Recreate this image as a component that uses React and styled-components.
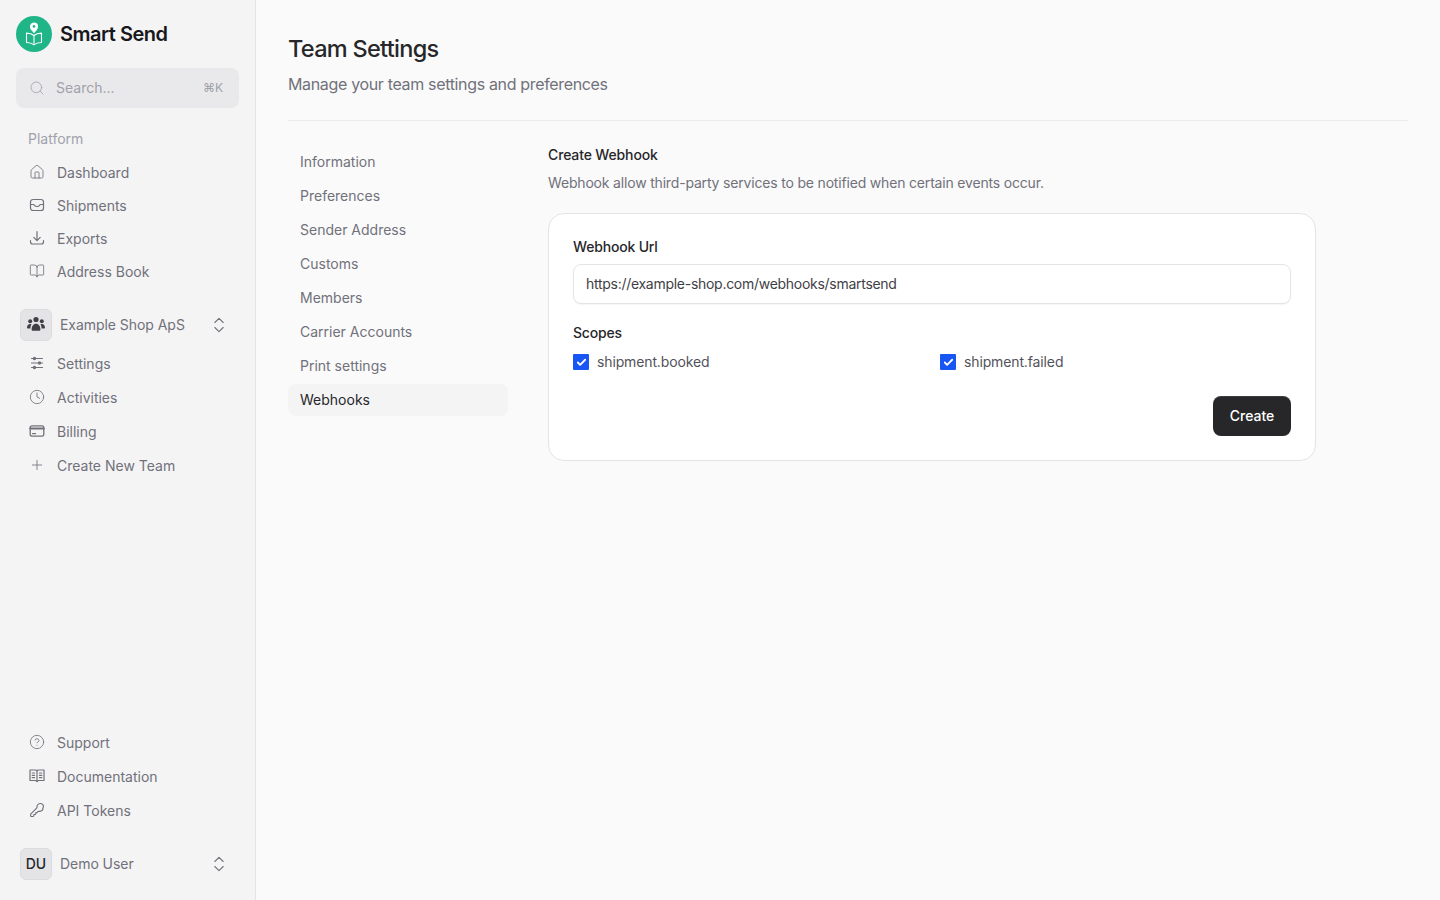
import styled, {createGlobalStyle} from "styled-components";
import {ChevronsUpDown, Check, CircleHelp, Clock, BookOpen, Home, Plus, Search} from "lucide-react";

const GlobalStyle = createGlobalStyle`
  * { box-sizing: border-box; }
  html, body { margin: 0; height: 100%; }
  body {
    font-family: Inter, 'Liberation Sans', sans-serif;
    font-size: 14px;
    background: #fafafa;
    color: #27272a;
  }
`;

const Layout = styled.div`
  display: flex;
  width: 1440px;
  height: 900px;
  overflow: hidden;
`;

const Sidebar = styled.aside`
  width: 256px;
  flex: none;
  display: flex;
  flex-direction: column;
  padding: 16px 16px 20px;
  background: #f4f4f5;
  border-right: 1px solid #e4e4e7;
`;

const Brand = styled.div`
  display: flex;
  align-items: center;
  gap: 8px;
  height: 36px;
  font-size: 20px;
  font-weight: 600;
  letter-spacing: -0.5px;
  color: #18181b;
`;

const LogoMark = styled.div`
  width: 36px;
  height: 36px;
  border-radius: 50%;
  background: #20b586;
  display: flex;
  align-items: center;
  justify-content: center;
`;

const SearchBox = styled.div`
  margin-top: 16px;
  height: 40px;
  display: flex;
  align-items: center;
  gap: 11px;
  padding: 0 16px 0 13px;
  border-radius: 8px;
  background: #e9e9eb;
  color: #a1a1aa;
  span { flex: 1; padding-bottom: 2px; }
  kbd { font-family: inherit; font-size: 12px; padding-bottom: 2px; }
`;

const SectionLabel = styled.div`
  margin: 21px 0 11px;
  padding-left: 12px;
  height: 20px;
  line-height: 20px;
  color: #a1a1aa;
`;

const NavList = styled.div`
  display: flex;
  flex-direction: column;
  gap: ${p => p.$gap}px;
`;

const NavItem = styled.div`
  height: 24px;
  display: flex;
  align-items: center;
  gap: 12px;
  padding-left: 13px;
  color: #71717a;
  svg { color: #71717a; flex: none; }
`;

const Switcher = styled.div`
  display: flex;
  align-items: center;
  gap: 8px;
  height: 32px;
  padding: 0 10px 0 4px;
  color: #71717a;
  letter-spacing: -0.05px;
  margin-top: ${p => p.$mt}px;
  margin-bottom: ${p => p.$mb}px;
  span { flex: 1; padding-bottom: 2px; }
  > svg { color: #71717a; }
`;

const SquareAvatar = styled.div`
  width: 32px;
  height: 32px;
  flex: none;
  border-radius: 6px;
  background: #e4e4e7;
  border: 1px solid #dcdcdf;
  padding-bottom: 2px;
  color: #27272a;
  font-weight: 500;
  display: flex;
  align-items: center;
  justify-content: center;
`;

const Spacer = styled.div`
  flex: 1;
`;

const Main = styled.main`
  flex: 1;
  padding: 32px 32px 0;
`;

const Title = styled.h1`
  margin: 0;
  font-size: 23.5px;
  line-height: 34px;
  font-weight: 500;
  letter-spacing: -0.7px;
  color: #27272a;
`;

const Subtitle = styled.p`
  margin: 6px 0 0;
  font-size: 16px;
  line-height: 24px;
  letter-spacing: -0.34px;
  color: #71717a;
`;

const Divider = styled.hr`
  margin: 24px 0;
  border: 0;
  border-top: 1px solid #ececee;
`;

const Columns = styled.div`
  display: flex;
  gap: 40px;
`;

const SubNav = styled.nav`
  width: 220px;
  flex: none;
  padding-top: 1px;
  display: flex;
  flex-direction: column;
  gap: 2px;
`;

const SubNavItem = styled.div`
  height: 32px;
  display: flex;
  align-items: center;
  padding: 0 12px 2px;
  border-radius: 8px;
  color: ${p => (p.$active ? "#27272a" : "#71717a")};
  background: ${p => (p.$active ? "#f4f4f5" : "transparent")};
`;

const Content = styled.section`
  width: 768px;
`;

const SectionTitle = styled.h2`
  margin: 0;
  font-size: 14px;
  line-height: 20px;
  font-weight: 500;
  letter-spacing: -0.14px;
  color: #27272a;
`;

const SectionText = styled.p`
  margin: 8px 0 20px;
  line-height: 20px;
  letter-spacing: -0.18px;
  color: #71717a;
`;

const Card = styled.div`
  background: #fff;
  border: 1px solid #e4e4e7;
  border-radius: 16px;
  padding: 24px;
`;

const FieldLabel = styled.div`
  line-height: 18px;
  padding-bottom: 2px;
  font-weight: 500;
  letter-spacing: -0.18px;
  color: #27272a;
`;

const Input = styled.div`
  margin-top: 6px;
  height: 40px;
  display: flex;
  align-items: center;
  padding: 0 12px 2px;
  background: #fff;
  border: 1px solid #e4e4e7;
  border-radius: 8px;
  box-shadow: 0 1px 1px rgba(0, 0, 0, 0.04);
  letter-spacing: -0.28px;
  color: #3f3f46;
`;

const ScopesLabel = styled(FieldLabel)`
  margin-top: 19px;
  line-height: 20px;
  padding-bottom: 0;
`;

const ScopeGrid = styled.div`
  margin-top: 9px;
  display: grid;
  grid-template-columns: 1fr 1fr;
  column-gap: 16px;
`;

const Scope = styled.label`
  display: flex;
  align-items: center;
  gap: 8px;
  height: 20px;
  padding-bottom: 2px;
  letter-spacing: -0.13px;
  color: #52525b;
`;

const CheckBox = styled.span`
  width: 16px;
  height: 16px;
  margin-top: 2px;
  background: #1755f4;
  border-radius: 1px;
  color: #fff;
  display: flex;
  align-items: center;
  justify-content: center;
`;

const Actions = styled.div`
  margin-top: 24px;
  display: flex;
  justify-content: flex-end;
`;

const Button = styled.button`
  height: 40px;
  width: 78px;
  border: 0;
  border-radius: 8px;
  padding: 0 0 2px;
  background: #27272a;
  box-shadow: inset 0 1px 0 rgba(255, 255, 255, 0.1);
  color: #fff;
  font: 500 14px Inter, 'Liberation Sans', sans-serif;
  letter-spacing: -0.05px;
`;

const Logo = () => (
    <svg width="26" height="26" viewBox="0 0 26 26" fill="none" stroke="#fff" strokeWidth="1.1" strokeLinejoin="round">
        <path d="M13 2a3.5 3.5 0 0 0-3.5 3.5c0 2.5 3.5 5.8 3.5 5.8s3.5-3.3 3.5-5.8A3.5 3.5 0 0 0 13 2Z" fill="#fff"/>
        <circle cx="13" cy="5.4" r="1.3" fill="#20b586" stroke="none"/>
        <path d="M13 14.5c-1.8-1.6-4.4-2.4-7.5-2.4v9.4c3.1 0 5.7.8 7.5 2.4 1.8-1.6 4.4-2.4 7.5-2.4v-9.4c-3.1 0-5.7.8-7.5 2.4Z"/>
        <path d="M13 14.5v9.4"/>
    </svg>
);

const Team = () => (
    <svg width="20" height="20" viewBox="0 0 20 20" fill="#3f3f46">
        <circle cx="10" cy="5.5" r="2.6"/>
        <circle cx="4.2" cy="7.2" r="2"/>
        <circle cx="15.8" cy="7.2" r="2"/>
        <path d="M5.6 15.8c0-3.6 1.8-6 4.4-6s4.4 2.4 4.4 6c0 .6-.4.9-1 .9H6.6c-.6 0-1-.3-1-.9Z"/>
        <path d="M4.4 14.6H1.8c-.5 0-.8-.3-.8-.8 0-2.3 1.3-3.9 3.2-3.9.5 0 .9.1 1.3.3-.7 1.1-1.1 2.7-1.1 4.4Z"/>
        <path d="M15.6 14.6h2.6c.5 0 .8-.3.8-.8 0-2.3-1.3-3.9-3.2-3.9-.5 0-.9.1-1.3.3.7 1.1 1.1 2.7 1.1 4.4Z"/>
    </svg>
);

const Outline = ({children, width = 1.2}) => (
    <svg width="16" height="16" viewBox="0 0 16 16" fill="none" stroke="currentColor"
         strokeWidth={width} strokeLinecap="round" strokeLinejoin="round">
        {children}
    </svg>
);

const Tray = () => (
    <Outline>
        <rect x="1.5" y="2.5" width="13" height="11" rx="2.6"/>
        <path d="M1.6 7.5h2.6c.8 0 1 .4 1.4 1 .4.7 1 1 2.4 1s2-.3 2.4-1c.4-.6.6-1 1.4-1h2.6"/>
    </Outline>
);

const Exports = () => (
    <Outline>
        <path d="M8 1.5v9M4.8 7.4 8 10.6l3.2-3.2"/>
        <path d="M1.5 10.5v1.2c0 1.3 1 2.3 2.3 2.3h8.4c1.3 0 2.3-1 2.3-2.3v-1.2"/>
    </Outline>
);

const Sliders = () => (
    <Outline>
        <path d="M2.5 3.5h11M2.5 8h11M2.5 12.5h11"/>
        <circle cx="5.5" cy="3.5" r="1.1" fill="currentColor"/>
        <circle cx="10.5" cy="8" r="1.1" fill="currentColor"/>
        <circle cx="5.5" cy="12.5" r="1.1" fill="currentColor"/>
    </Outline>
);

const BillingIcon = () => (
    <Outline width={1.3}>
        <rect x="1.2" y="2.8" width="13.6" height="10.4" rx="1.8"/>
        <path d="M1.2 5.6h13.6" strokeWidth="2"/>
        <path d="M3.6 10.6h3"/>
    </Outline>
);

const Docs = () => (
    <Outline>
        <path d="M1 2v10.5h5.8L8 13.6l1.2-1.1H15V2H9.2L8 2.8 6.8 2Z"/>
        <path d="M8 2.8v10.4M3.2 5h2.4M3.2 7.3h2.4M3.2 9.6h2.4M10.4 5h2.4M10.4 7.3h2.4M10.4 9.6h2.4"/>
    </Outline>
);

const KeyIcon = () => (
    <Outline width={1.1}>
        <path d="M14.5 4.8a3.3 3.3 0 0 0-6.4-1.1c-.2.6-.2 1.3 0 1.9L1.9 11.8c-.2.2-.3.4-.3.7v1.3c0 .4.3.7.7.7h1.5c.2 0 .4-.1.5-.2l.6-.7v-1.1h1.2l.8-.8v-1.1h1.1l1.4-1.4c.7.2 1.4.2 2 0a3.3 3.3 0 0 0 2.6-3.4Z"/>
    </Outline>
);

const lucide = Icon => () => <Icon size={16} strokeWidth={1.25}/>;

const platformLinks = [
    {label: "Dashboard", Icon: lucide(Home)},
    {label: "Shipments", Icon: Tray},
    {label: "Exports", Icon: Exports},
    {label: "Address Book", Icon: lucide(BookOpen)},
];

const teamLinks = [
    {label: "Settings", Icon: Sliders},
    {label: "Activities", Icon: lucide(Clock)},
    {label: "Billing", Icon: BillingIcon},
    {label: "Create New Team", Icon: lucide(Plus)},
];

const helpLinks = [
    {label: "Support", Icon: lucide(CircleHelp)},
    {label: "Documentation", Icon: Docs},
    {label: "API Tokens", Icon: KeyIcon},
];

const settingsLinks = [
    "Information", "Preferences", "Sender Address", "Customs",
    "Members", "Carrier Accounts", "Print settings", "Webhooks",
];

const Links = ({items, gap}) => (
    <NavList $gap={gap}>
        {items.map(({label, Icon}) => (
            <NavItem key={label}>
                <Icon/>
                {label}
            </NavItem>
        ))}
    </NavList>
);

const App = () => {
    return (
        <Layout>
            <GlobalStyle/>
            <Sidebar>
                <Brand>
                    <LogoMark><Logo/></LogoMark>
                    Smart Send
                </Brand>
                <SearchBox>
                    <Search size={16} strokeWidth={1.25}/>
                    <span>Search...</span>
                    <kbd>⌘K</kbd>
                </SearchBox>
                <SectionLabel>Platform</SectionLabel>
                <Links items={platformLinks} gap={9}/>
                <Switcher $mt={26} $mb={10}>
                    <SquareAvatar><Team/></SquareAvatar>
                    <span>Example Shop ApS</span>
                    <ChevronsUpDown size={20} strokeWidth={1.3}/>
                </Switcher>
                <Links items={teamLinks} gap={10}/>
                <Spacer/>
                <Links items={helpLinks} gap={10}/>
                <Switcher $mt={26} $mb={0}>
                    <SquareAvatar>DU</SquareAvatar>
                    <span>Demo User</span>
                    <ChevronsUpDown size={20} strokeWidth={1.3}/>
                </Switcher>
            </Sidebar>
            <Main>
                <Title>Team Settings</Title>
                <Subtitle>Manage your team settings and preferences</Subtitle>
                <Divider/>
                <Columns>
                    <SubNav>
                        {settingsLinks.map(label => (
                            <SubNavItem key={label} $active={label === "Webhooks"}>{label}</SubNavItem>
                        ))}
                    </SubNav>
                    <Content>
                        <SectionTitle>Create Webhook</SectionTitle>
                        <SectionText>Webhook allow third-party services to be notified when certain events occur.</SectionText>
                        <Card>
                            <FieldLabel>Webhook Url</FieldLabel>
                            <Input>https://example-shop.com/webhooks/smartsend</Input>
                            <ScopesLabel>Scopes</ScopesLabel>
                            <ScopeGrid>
                                {["shipment.booked", "shipment.failed"].map(scope => (
                                    <Scope key={scope}>
                                        <CheckBox><Check size={11} strokeWidth={4}/></CheckBox>
                                        {scope}
                                    </Scope>
                                ))}
                            </ScopeGrid>
                            <Actions><Button>Create</Button></Actions>
                        </Card>
                    </Content>
                </Columns>
            </Main>
        </Layout>
    )
}

export default App;
